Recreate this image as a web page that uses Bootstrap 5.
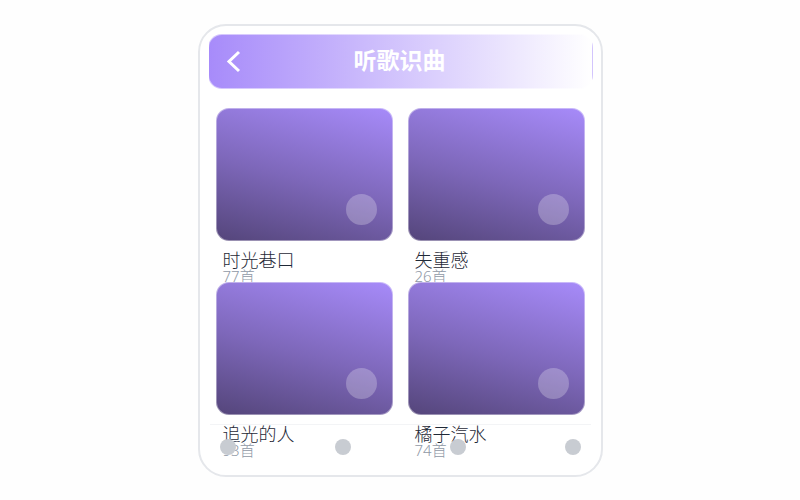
<!DOCTYPE html>
<html lang="zh-CN">
<head>
<meta charset="utf-8">
<meta name="viewport" content="width=device-width, initial-scale=1">
<title>听歌识曲</title>
<link href="https://cdn.jsdelivr.net/npm/bootstrap@5.3.0/dist/css/bootstrap.min.css" rel="stylesheet">
<style>
body { background: #fefefe; color: #1f2937; font-family: "Noto Sans", "Noto Sans CJK SC", sans-serif; }
.phone { max-width: 405px; padding: 8px 8px 19px; background: #fff; border: 2px solid #e5e7eb; border-radius: 28px; }
.topbar { height: 55px; margin-bottom: 19px; border: 1px solid rgba(255,255,255,.5); border-radius: 14px; background: linear-gradient(90deg, #a78bfa, #fff); }
.topbar h1 { padding-bottom: 4px; font-size: 23px; line-height: 32px; font-weight: 700; font-family: "Noto Sans CJK SC", sans-serif; }
.back { width: 32px; height: 32px; margin-left: 9px; }
.spacer { width: 42px; }
.albums { column-gap: 15px; padding: 0 8px; display: grid; grid-template-columns: 1fr 1fr; }
.cover { height: 133px; border: 1px solid rgba(255,255,255,.4); border-radius: 13px; background: linear-gradient(195deg, #a78bfa, #7d67b9 54%, #54457a) border-box; }
.play { right: 15px; bottom: 15px; width: 31px; height: 31px; background: rgba(255,255,255,.25); }
.info { padding: 9px 7px 0; }
.song { font-size: 18px; line-height: 20px; font-weight: 300; }
.count { font-size: 15px; line-height: 12px; font-weight: 300; color: #9099a6; }
.tabs { left: 10px; right: 10px; bottom: 0; height: 51px; padding: 14px 10px 0; border-top: 1px solid #f3f4f6; }
.dot { width: 16px; height: 16px; background: #c8ccd2; }
</style>
<script src="https://cdn.jsdelivr.net/npm/bootstrap@5.3.0/dist/js/bootstrap.bundle.min.js"></script>
</head>
<body>
<div class="min-vh-100 d-flex align-items-center justify-content-center">
  <main class="phone w-100 position-relative">
    <header class="topbar d-flex align-items-center text-white">
      <button class="back btn border-0 p-0 d-flex align-items-center justify-content-center" type="button" aria-label="返回">
        <svg width="20" height="24" viewBox="0 0 20 24" fill="none" stroke="#fff" stroke-width="3"><path d="M15 3 5 12.500 15 22"/></svg>
      </button>
      <h1 class="flex-grow-1 text-center m-0">听歌识曲</h1>
      <span class="spacer"></span>
    </header>
    <section class="albums">
      <article>
        <div class="cover position-relative"><button class="play btn border-0 rounded-circle p-0 position-absolute" type="button" aria-label="播放"></button></div>
        <div class="info"><div class="song">时光巷口</div><div class="count">77首</div></div>
      </article>
      <article>
        <div class="cover position-relative"><button class="play btn border-0 rounded-circle p-0 position-absolute" type="button" aria-label="播放"></button></div>
        <div class="info"><div class="song">失重感</div><div class="count">26首</div></div>
      </article>
      <article>
        <div class="cover position-relative"><button class="play btn border-0 rounded-circle p-0 position-absolute" type="button" aria-label="播放"></button></div>
        <div class="info"><div class="song">追光的人</div><div class="count">93首</div></div>
      </article>
      <article>
        <div class="cover position-relative"><button class="play btn border-0 rounded-circle p-0 position-absolute" type="button" aria-label="播放"></button></div>
        <div class="info"><div class="song">橘子汽水</div><div class="count">74首</div></div>
      </article>
    </section>
    <nav class="tabs position-absolute d-flex justify-content-between">
      <button class="dot btn border-0 rounded-circle p-0" type="button" aria-label="首页"></button>
      <button class="dot btn border-0 rounded-circle p-0" type="button" aria-label="发现"></button>
      <button class="dot btn border-0 rounded-circle p-0" type="button" aria-label="歌单"></button>
      <button class="dot btn border-0 rounded-circle p-0" type="button" aria-label="我的"></button>
    </nav>
  </main>
</div>
</body>
</html>
